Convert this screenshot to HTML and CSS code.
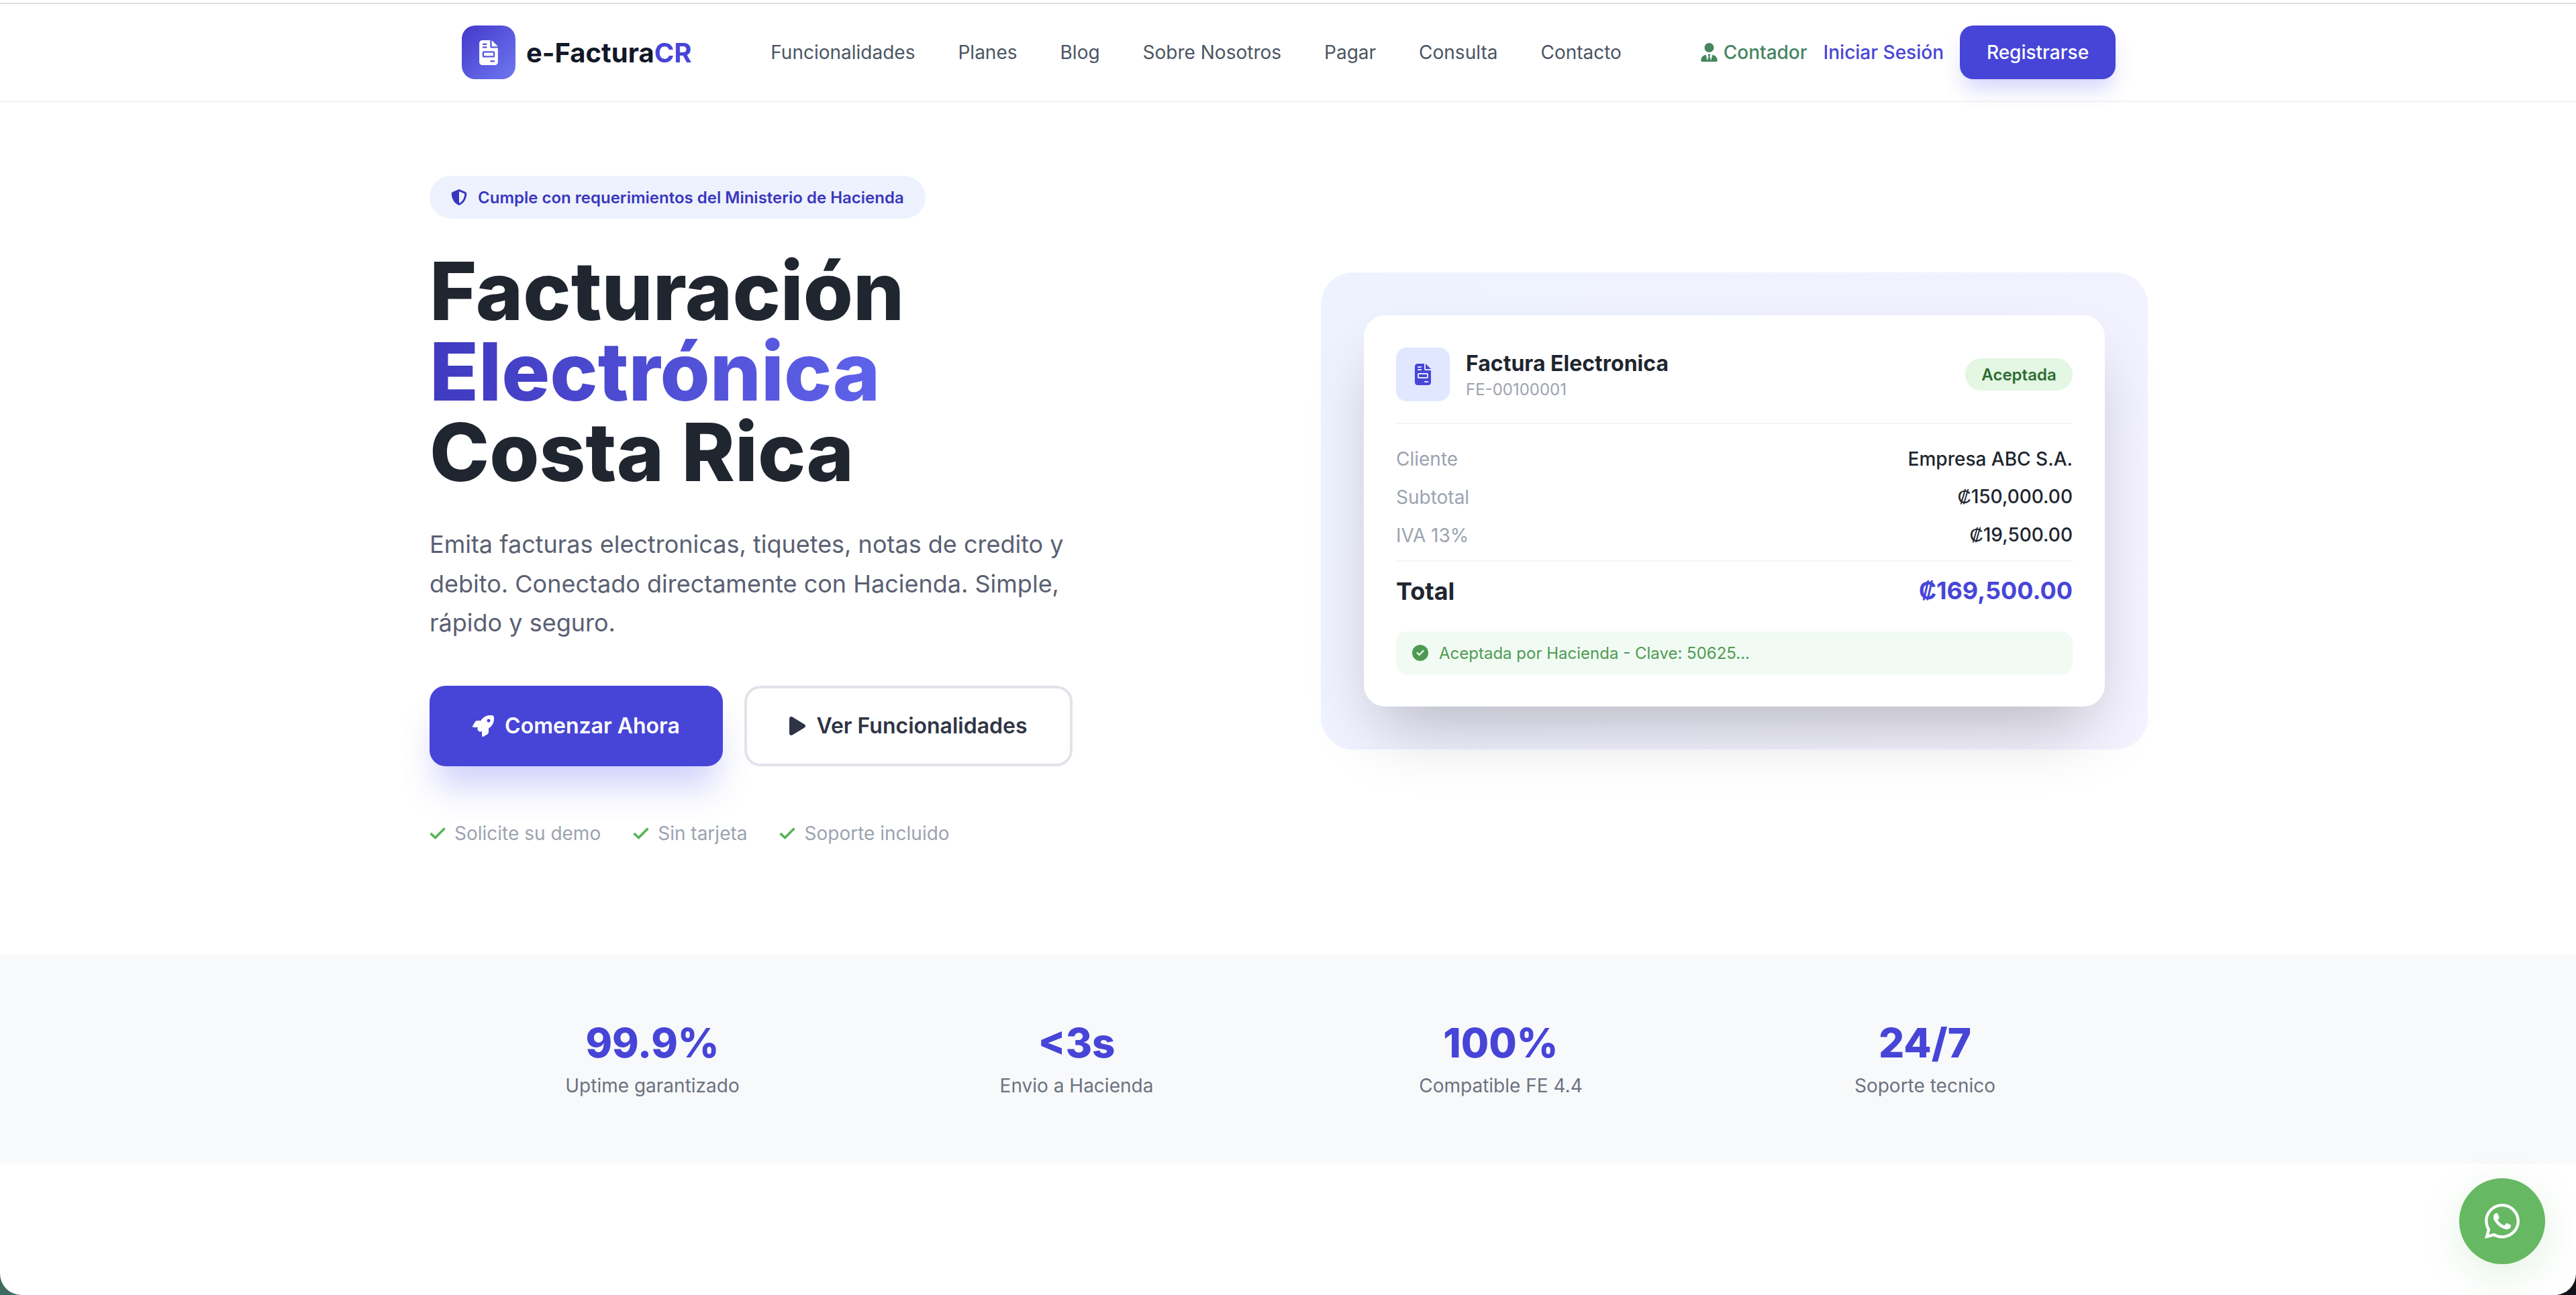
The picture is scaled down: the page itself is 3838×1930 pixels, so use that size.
FILE: index.html
```html
<!DOCTYPE html>
<html lang="es">
<head>
    <meta charset="UTF-8">
    <meta name="viewport" content="width=device-width, initial-scale=1.0">
    <title>e-FacturaCR</title>
    <link rel="stylesheet" href="styles.css">
</head>
<body>

    <svg class="icon-defs" xmlns="http://www.w3.org/2000/svg">
        <symbol id="i-invoice" viewBox="0 0 384 512"><path d="M64 0C28.7 0 0 28.7 0 64V448c0 35.3 28.7 64 64 64H320c35.3 0 64-28.7 64-64V160H256c-17.7 0-32-14.3-32-32V0H64zM256 0V128H384L256 0zM80 64h64c8.8 0 16 7.2 16 16s-7.2 16-16 16H80c-8.8 0-16-7.2-16-16s7.2-16 16-16zm0 64h64c8.8 0 16 7.2 16 16s-7.2 16-16 16H80c-8.8 0-16-7.2-16-16s7.2-16 16-16zm16 96H288c17.7 0 32 14.3 32 32v64c0 17.7-14.3 32-32 32H96c-17.7 0-32-14.3-32-32V256c0-17.7 14.3-32 32-32zm0 32v64H288V256H96zM240 416h64c8.8 0 16 7.2 16 16s-7.2 16-16 16H240c-8.8 0-16-7.2-16-16s7.2-16 16-16z"/></symbol>
        <symbol id="i-check" viewBox="0 0 24 18"><polyline points="1.5,9 8.5,15.5 22.5,1.5" fill="none" stroke="currentColor" stroke-width="3.6"/></symbol>
    </svg>

    <div class="window">

        <!-- Nav -->
        <header class="topbar">
            <div class="nav-inner">
                <a class="logo">
                    <span class="logo-box"><svg class="logo-icon"><use href="#i-invoice"/></svg></span>
                    <span class="logo-text">e-Factura<span class="accent">CR</span></span>
                </a>
                <nav class="nav-links">
                    <a>Funcionalidades</a>
                    <a>Planes</a>
                    <a>Blog</a>
                    <a>Sobre Nosotros</a>
                    <a>Pagar</a>
                    <a>Consulta</a>
                    <a>Contacto</a>
                </nav>
                <div class="nav-actions">
                    <a class="link-contador">
                        <svg class="tie-icon" viewBox="0 0 448 512"><path d="M96 128a128 128 0 1 0 256 0A128 128 0 1 0 96 128zm94.5 200.2l18.6 31L175.8 483.1l-36-146.9c-2-8.1-9.8-13.4-17.9-11.3C51.9 342.4 0 405.8 0 481.3c0 17 13.8 30.7 30.7 30.7H162.5c0 0 0 0 .1 0H168 280h5.5c0 0 0 0 .1 0H417.3c17 0 30.7-13.8 30.7-30.7c0-75.5-51.9-138.9-121.9-156.4c-8.1-2-15.9 3.3-17.9 11.3l-36 146.9L238.9 359.2l18.6-31c6.4-10.7-1.3-24.2-13.7-24.2H224 204.3c-12.4 0-20.1 13.6-13.7 24.2z"/></svg>
                        Contador
                    </a>
                    <a class="link-login">Iniciar Sesión</a>
                    <a class="btn-register">Registrarse</a>
                </div>
            </div>
        </header>

        <!-- Hero -->
        <section class="hero">
            <div class="hero-left">
                <div class="pill">
                    <svg class="shield-icon" viewBox="0 0 512 512"><path d="M256 0c4.6 0 9.2 1 13.4 2.9L457.7 82.8c22 9.3 38.4 31 38.3 57.2c-.5 99.2-41.3 280.7-213.6 363.2c-16.7 8-36.1 8-52.8 0C57.3 420.7 16.5 239.2 16 140c-.1-26.2 16.3-47.9 38.3-57.2L242.7 2.9C246.8 1 251.4 0 256 0zm0 66.8V444.8C394 378 431.1 230.1 432 141.4L256 66.8l0 0z"/></svg>
                    Cumple con requerimientos del Ministerio de Hacienda
                </div>
                <h1>Facturación<br><span class="gradient-text">Electrónica</span><br>Costa Rica</h1>
                <p class="lead">Emita facturas electronicas, tiquetes, notas de credito y debito. Conectado directamente con Hacienda. Simple, rápido y seguro.</p>
                <div class="hero-buttons">
                    <a class="btn btn-primary">
                        <svg class="btn-icon rocket" viewBox="0 0 512 512"><path d="M156.6 384.9L125.7 354c-8.5-8.5-11.5-20.8-7.7-32.2c3-8.9 7-20.5 11.8-33.8L24 288c-8.6 0-16.6-4.6-20.9-12.1s-4.2-16.7 .2-24.1l52.5-88.5c13-21.9 36.5-35.3 61.9-35.3l82.3 0c2.4-4 4.8-7.7 7.2-11.3C289.1-4.1 411.1-8.1 483.9 5.3c11.6 2.1 20.6 11.2 22.8 22.8c13.4 72.9 9.3 194.8-111.4 276.7c-3.5 2.4-7.3 4.8-11.3 7.2v82.3c0 25.4-13.4 49-35.3 61.9l-88.5 52.5c-7.4 4.4-16.6 4.5-24.1 .2s-12.1-12.2-12.1-20.9V380.8c-14.1 4.9-26.4 8.9-35.7 11.9c-11.2 3.6-23.4 .5-31.8-7.8zM384 168a40 40 0 1 0 0-80 40 40 0 1 0 0 80z"/></svg>
                        Comenzar Ahora
                    </a>
                    <a class="btn btn-outline">
                        <svg class="btn-icon play" viewBox="0 0 384 512"><path d="M73 39c-14.8-9.1-33.4-9.4-48.5-.9S0 62.6 0 80V432c0 17.4 9.4 33.4 24.5 41.9s33.7 8.1 48.5-.9L361 297c14.3-8.7 23-24.2 23-41s-8.7-32.2-23-41L73 39z"/></svg>
                        Ver Funcionalidades
                    </a>
                </div>
                <ul class="perks">
                    <li><svg class="perk-icon"><use href="#i-check"/></svg>Solicite su demo</li>
                    <li><svg class="perk-icon"><use href="#i-check"/></svg>Sin tarjeta</li>
                    <li><svg class="perk-icon"><use href="#i-check"/></svg>Soporte incluido</li>
                </ul>
            </div>

            <div class="hero-right">
                <div class="invoice-card">
                    <div class="invoice-head">
                        <span class="invoice-icon"><svg class="invoice-svg"><use href="#i-invoice"/></svg></span>
                        <div class="invoice-title">
                            <strong>Factura Electronica</strong>
                            <span>FE-00100001</span>
                        </div>
                        <span class="badge">Aceptada</span>
                    </div>
                    <div class="invoice-rows">
                        <div class="row"><span>Cliente</span><b>Empresa ABC S.A.</b></div>
                        <div class="row"><span>Subtotal</span><b><span class="colon">₡</span>150,000.00</b></div>
                        <div class="row"><span>IVA 13%</span><b><span class="colon">₡</span>19,500.00</b></div>
                    </div>
                    <div class="row-total"><span>Total</span><b><span class="colon">₡</span>169,500.00</b></div>
                    <div class="invoice-status">
                        <svg class="status-icon" viewBox="0 0 512 512"><path d="M256 512A256 256 0 1 0 256 0a256 256 0 1 0 0 512zM369 209L241 337c-9.4 9.4-24.6 9.4-33.9 0l-64-64c-9.4-9.4-9.4-24.6 0-33.9s24.6-9.4 33.9 0l47 47L335 175c9.4-9.4 24.6-9.4 33.9 0s9.4 24.6 0 33.9z"/></svg>
                        Aceptada por Hacienda - Clave: 50625...
                    </div>
                </div>
            </div>
        </section>

        <!-- Stats -->
        <section class="stats">
            <div class="stats-grid">
                <div class="stat"><div class="stat-value">99.9%</div><div class="stat-label">Uptime garantizado</div></div>
                <div class="stat"><div class="stat-value">&lt;3s</div><div class="stat-label">Envio a Hacienda</div></div>
                <div class="stat"><div class="stat-value">100%</div><div class="stat-label">Compatible FE 4.4</div></div>
                <div class="stat"><div class="stat-value">24/7</div><div class="stat-label">Soporte tecnico</div></div>
            </div>
        </section>

    </div>

    <a class="whatsapp">
        <svg class="whatsapp-icon" viewBox="0 0 448 512"><path d="M380.9 97.1C339 55.1 283.2 32 223.9 32c-122.4 0-222 99.6-222 222 0 39.1 10.2 77.3 29.6 111L0 480l117.7-30.9c32.4 17.7 68.9 27 106.1 27h.1c122.3 0 224.1-99.6 224.1-222 0-59.3-25.2-115-67.1-157zm-157 341.6c-33.2 0-65.7-8.9-94-25.7l-6.7-4-69.8 18.3L72 359.2l-4.4-7c-18.5-29.4-28.2-63.3-28.2-98.2 0-101.7 82.8-184.5 184.6-184.5 49.3 0 95.6 19.2 130.4 54.1 34.8 34.9 56.2 81.2 56.1 130.5 0 101.8-84.9 184.6-186.6 184.6zm101.2-138.2c-5.5-2.8-32.8-16.2-37.9-18-5.1-1.9-8.8-2.8-12.5 2.8-3.7 5.6-14.3 18-17.6 21.8-3.2 3.7-6.5 4.2-12 1.4-32.6-16.3-54-29.1-75.5-66-5.7-9.8 5.7-9.1 16.3-30.3 1.8-3.7.9-6.9-.5-9.7-1.4-2.8-12.5-30.1-17.1-41.2-4.5-10.8-9.1-9.3-12.5-9.5-3.2-.2-6.9-.2-10.6-.2-3.7 0-9.7 1.4-14.8 6.9-5.1 5.6-19.4 19-19.4 46.3 0 27.3 19.9 53.7 22.6 57.4 2.8 3.7 39.1 59.7 94.8 83.8 35.2 15.2 49 16.5 66.6 13.9 10.7-1.6 32.8-13.4 37.4-26.4 4.6-13 4.6-24.1 3.2-26.4-1.3-2.5-5-3.9-10.5-6.6z"/></svg>
    </a>

</body>
</html>
```

FILE: styles.css
```css
* {
    box-sizing: border-box;
}

html, body {
    height: 100%;
}

body {
    margin: 0;
    font-family: Inter, "Noto Sans", sans-serif;
    color: #20262f;
    background: linear-gradient(90deg, #3f6b62, #101418);
    overflow: hidden;
}

.icon-defs {
    display: none;
}

svg {
    fill: currentColor;
    flex-shrink: 0;
}

.window {
    height: 100%;
    padding-top: 4px;
    background: #fff;
    border-radius: 0 0 32px 32px;
    overflow: hidden;
}

/* Nav */
.topbar {
    border-top: 2px solid #dedede;
    border-bottom: 2px solid #f3f4f6;
}

.nav-inner {
    width: 2560px;
    height: 144px;
    margin-left: 640px;
    padding: 0 48px;
    display: flex;
    align-items: center;
    justify-content: space-between;
}

.logo {
    display: flex;
    align-items: center;
    gap: 16px;
}

.logo-box {
    width: 80px;
    height: 80px;
    border-radius: 20px;
    background: linear-gradient(135deg, #4338ca, #6f78f0);
    display: flex;
    align-items: center;
    justify-content: center;
    color: #fff;
}

.logo-icon {
    width: 28px;
    height: 37px;
}

.logo-text {
    font-size: 40px;
    font-weight: 700;
    color: #111827;
}

.accent {
    color: #4745d7;
}

.nav-links {
    display: flex;
    gap: 64px;
    font-size: 28px;
    color: #4b5563;
}

.nav-actions {
    display: flex;
    align-items: center;
    gap: 24px;
    font-size: 28px;
}

.link-contador {
    display: flex;
    align-items: center;
    gap: 9px;
    font-weight: 500;
    color: #458560;
}

.tie-icon {
    width: 25px;
    height: 28px;
}

.link-login {
    font-weight: 500;
    color: #4745d7;
}

.btn-register {
    height: 80px;
    width: 232px;
    display: flex;
    align-items: center;
    justify-content: center;
    border-radius: 20px;
    background: #4745d7;
    color: #fff;
    font-weight: 500;
    box-shadow: 0 20px 30px -6px rgba(99, 102, 241, 0.28);
}

/* Hero */
.hero {
    width: 2560px;
    margin-left: 640px;
    padding: 110px 0 160px;
    display: grid;
    grid-template-columns: 1232px 1232px;
    gap: 96px;
    align-items: center;
}

.pill {
    display: flex;
    width: fit-content;
    align-items: center;
    gap: 16px;
    height: 64px;
    padding: 0 32px;
    border-radius: 32px;
    background: #eef2ff;
    color: #3a37bd;
    font-size: 24px;
    font-weight: 600;
}

.shield-icon {
    width: 24px;
    height: 24px;
}

h1 {
    margin: 48px 0;
    font-size: 120px;
    line-height: 120px;
    font-weight: 800;
    color: #20262f;
}

.gradient-text {
    background: linear-gradient(90deg, #3f3abf, #5f62ea);
    -webkit-background-clip: text;
    background-clip: text;
    color: transparent;
}

.lead {
    margin: 0 0 64px;
    max-width: 1024px;
    font-size: 36px;
    line-height: 58.5px;
    color: #5a6072;
}

.hero-buttons {
    display: flex;
    gap: 32px;
}

.btn {
    height: 120px;
    display: flex;
    align-items: center;
    justify-content: center;
    gap: 16px;
    border-radius: 24px;
    font-size: 32px;
    font-weight: 600;
}

.btn-primary {
    width: 437px;
    background: #4745d7;
    color: #fff;
    box-shadow: 0 40px 50px -10px rgba(99, 102, 241, 0.3);
}

.btn-outline {
    width: 489px;
    border: 4px solid #e2e3ea;
    color: #2f3545;
}

.btn-icon.rocket {
    width: 32px;
    height: 32px;
}

.btn-icon.play {
    width: 24px;
    height: 32px;
}

.perks {
    list-style: none;
    margin: 80px 0 0;
    padding: 0;
    display: flex;
    gap: 48px;
    font-size: 28px;
    line-height: 40px;
    color: #9ca3af;
}

.perks li {
    display: flex;
    align-items: center;
    gap: 13px;
}

.perk-icon {
    width: 24px;
    height: 18px;
    color: #56b356;
}

/* Invoice preview */
.hero-right {
    padding: 64px;
    border-radius: 48px;
    background: linear-gradient(135deg, #eef2ff, #f5f3ff);
}

.invoice-card {
    padding: 48px;
    border-radius: 32px;
    background: #fff;
    box-shadow: 0 50px 100px -24px rgba(0, 0, 0, 0.25);
}

.invoice-head {
    display: flex;
    align-items: center;
    padding-bottom: 32px;
    border-bottom: 2px solid #f3f4f6;
}

.invoice-icon {
    width: 80px;
    height: 80px;
    margin-right: 24px;
    border-radius: 16px;
    background: #e0e7ff;
    color: #4745d7;
    display: flex;
    align-items: center;
    justify-content: center;
}

.invoice-svg {
    width: 24px;
    height: 32px;
}

.invoice-title {
    flex: 1;
    display: flex;
    flex-direction: column;
    padding-top: 2px;
}

.invoice-title strong {
    font-size: 32px;
    line-height: 40px;
    font-weight: 700;
    color: #20262f;
}

.invoice-title span {
    margin-top: 3px;
    font-size: 24px;
    line-height: 32px;
    color: #9ca3af;
}

.badge {
    width: 160px;
    height: 48px;
    border-radius: 24px;
    background: #e3f7e3;
    color: #2e6b32;
    font-size: 24px;
    font-weight: 600;
    display: flex;
    align-items: center;
    justify-content: center;
}

.invoice-rows {
    display: flex;
    flex-direction: column;
    gap: 16px;
    margin-top: 32px;
    padding-bottom: 17px;
    border-bottom: 2px solid #f3f4f6;
}

.row, .row-total {
    display: flex;
    justify-content: space-between;
    align-items: center;
}

.row {
    font-size: 28px;
    line-height: 40px;
    color: #9ca3af;
}

.row b {
    font-weight: 500;
    color: #20262f;
}

.row-total {
    margin-top: 19px;
    font-size: 36px;
    line-height: 48px;
    font-weight: 700;
    color: #20262f;
}

.row-total b {
    font-weight: 700;
    color: #4745d7;
}

.colon {
    font-family: "Liberation Sans", sans-serif;
}

.invoice-status {
    height: 64px;
    margin-top: 36px;
    padding: 0 24px;
    border-radius: 16px;
    background: #f1fbf3;
    color: #4f9a53;
    font-size: 24px;
    display: flex;
    align-items: center;
    gap: 16px;
}

.status-icon {
    width: 24px;
    height: 24px;
    color: #4f9a53;
}

/* Stats */
.stats {
    padding: 96px 0;
    background: #f8f9fb;
}

.stats-grid {
    width: 2560px;
    margin-left: 640px;
    padding: 0 48px;
    display: grid;
    grid-template-columns: repeat(4, 1fr);
    gap: 64px;
    text-align: center;
}

.stat-value {
    font-size: 60px;
    line-height: 72px;
    font-weight: 800;
    color: #4745d7;
    margin-bottom: 8px;
}

.stat-label {
    font-size: 28px;
    line-height: 40px;
    color: #6b7280;
}

/* WhatsApp button */
.whatsapp {
    position: fixed;
    right: 46px;
    bottom: 46px;
    width: 128px;
    height: 128px;
    border-radius: 50%;
    background: #66b862;
    color: #fff;
    display: flex;
    align-items: center;
    justify-content: center;
    box-shadow: 0 16px 60px rgba(76, 175, 80, 0.16);
}

.whatsapp-icon {
    width: 52px;
    height: 60px;
}
```
